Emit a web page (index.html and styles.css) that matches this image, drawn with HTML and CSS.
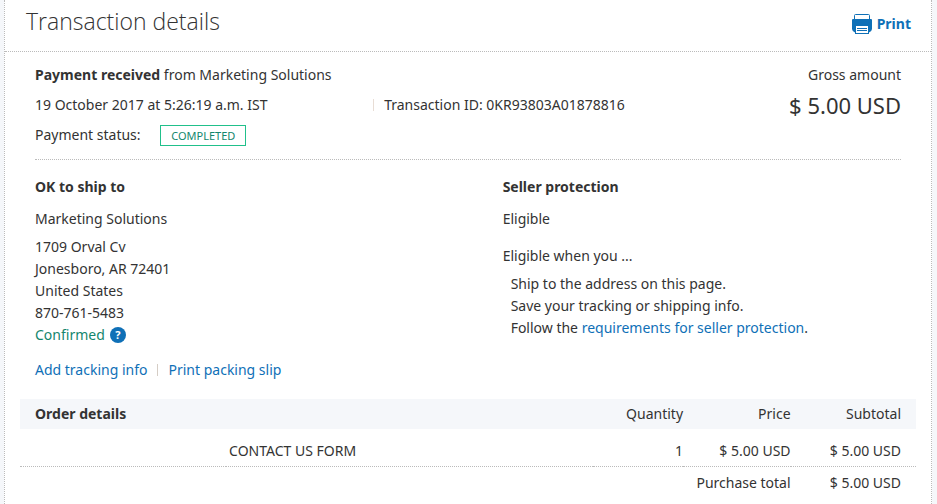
FILE: index.html
```
<!DOCTYPE html>
<html lang="en">
<head>
    <meta charset="UTF-8">
    <meta name="viewport" content="width=device-width, initial-scale=1.0">
    <title>Transaction details</title>
    <link rel="stylesheet" href="styles.css">
</head>
<body>

<main class="card">
    <header class="card-header">
        <h1>Transaction details</h1>
        <a href="#" class="print-link">
            <svg class="print-icon" width="20" height="20" viewBox="0 0 20 20" aria-hidden="true">
                <path d="M2.500 6V1.500a1 1 0 0 1 1-1h13a1 1 0 0 1 1 1V6" fill="#fff" stroke="#0f70b7"/>
                <path d="M1 5h18a1 1 0 0 1 1 1v9a4 4 0 0 1-3 3.500V20H3v-1.500A4 4 0 0 1 0 15V6a1 1 0 0 1 1-1z" fill="#0f70b7"/>
                <path d="M4 12h12v7H4z" fill="#fff"/>
                <path d="M5 14.500h10M5 16.500h10" stroke="#0f70b7"/>
            </svg>
            Print
        </a>
    </header>

    <div class="content">
        <!-- Payment summary -->
        <section class="summary">
            <div class="summary-info">
                <p><strong>Payment received</strong> from Marketing Solutions</p>
                <p class="summary-row">
                    <span>19 October 2017 at 5:26:19 a.m. IST</span>
                    <span class="transaction-id">Transaction ID: 0KR93803A01878816</span>
                </p>
                <p>Payment status: <span class="status">COMPLETED</span></p>
            </div>
            <div class="gross">
                <p>Gross amount</p>
                <p class="amount">$ 5.00 USD</p>
            </div>
        </section>

        <!-- Shipping and protection -->
        <div class="columns">
            <section>
                <h2>OK to ship to</h2>
                <p class="name">Marketing Solutions</p>
                <address>
                    1709 Orval Cv<br>
                    Jonesboro, AR 72401<br>
                    United States<br>
                    870-761-5483
                    <div class="confirmed">Confirmed <button type="button" class="help" aria-label="Help">?</button></div>
                </address>
                <p class="actions">
                    <a href="#">Add tracking info</a>
                    <a href="#" class="packing">Print packing slip</a>
                </p>
            </section>
            <section>
                <h2>Seller protection</h2>
                <p class="eligible">Eligible</p>
                <p class="eligible-when">Eligible when you ...</p>
                <ul class="conditions">
                    <li>Ship to the address on this page.</li>
                    <li>Save your tracking or shipping info.</li>
                    <li>Follow the <a href="#">requirements for seller protection</a>.</li>
                </ul>
            </section>
        </div>
    </div>

    <!-- Order details -->
    <table class="order">
        <thead>
            <tr>
                <th class="col-title" scope="col">Order details</th>
                <th class="col-item"></th>
                <th class="col-quantity num" scope="col">Quantity</th>
                <th class="col-price num" scope="col">Price</th>
                <th class="col-subtotal num" scope="col">Subtotal</th>
            </tr>
        </thead>
        <tbody>
            <tr class="item">
                <td></td>
                <td>CONTACT US FORM</td>
                <td class="num">1</td>
                <td class="num">$ 5.00 USD</td>
                <td class="num">$ 5.00 USD</td>
            </tr>
        </tbody>
        <tfoot>
            <tr>
                <td colspan="4" class="num">Purchase total</td>
                <td class="num">$ 5.00 USD</td>
            </tr>
        </tfoot>
    </table>
</main>

</body>
</html>
```

FILE: styles.css
```
* {
    box-sizing: border-box;
}
body {
    margin: 0;
    background-color: #f5f7fa;
    font-family: "Noto Sans", "Open Sans", sans-serif;
    font-size: 14px;
    line-height: 22px;
    color: #333;
}
h1, h2, p, ul {
    margin: 0;
}
a {
    color: #0f70b7;
    text-decoration: none;
}
a:hover {
    text-decoration: underline;
}
.card {
    min-height: 100vh;
    margin: 0 5px 0 4px;
    border: dotted #bbb;
    border-width: 0 1px;
    background-color: #fff;
}
.card-header {
    display: flex;
    justify-content: space-between;
    align-items: center;
    padding: 5px 20px 8px 21px;
    border-bottom: 1px dotted #bbb;
}
h1 {
    font-family: "Open Sans", "Noto Sans", sans-serif;
    font-size: 23px;
    font-weight: 300;
    line-height: 32px;
    padding-bottom: 6px;
}
.print-link {
    display: flex;
    align-items: center;
    gap: 5px;
    font-weight: bold;
}
.content {
    padding: 0 30px;
}
.summary {
    display: flex;
    justify-content: space-between;
    padding: 8px 0 9px;
    line-height: 30px;
    border-bottom: 1px dotted #bbb;
}
.summary-info {
    flex: 1;
}
.summary-row {
    display: grid;
    grid-template-columns: 39fr 61fr;
    align-items: center;
    margin-right: -113px;
}
.transaction-id {
    line-height: 12px;
    padding-left: 10px;
    border-left: 1px solid #e8ddd5;
}
.status {
    display: inline-block;
    margin-left: 16px;
    padding: 0 10px;
    border: 1px solid #21c08b;
    color: #14866d;
    font-size: 11px;
    line-height: 19px;
}
.gross {
    text-align: right;
}
.amount {
    font-size: 22px;
}
.columns {
    display: grid;
    grid-template-columns: 54% 46%;
    padding: 16px 0 18px;
}
h2 {
    font-size: 14px;
    line-height: 22px;
    margin-bottom: 10px;
}
.name {
    margin-bottom: 6px;
}
address {
    font-style: normal;
}
.confirmed {
    display: flex;
    align-items: center;
    gap: 5px;
    color: #14866d;
}
.help {
    width: 16px;
    height: 16px;
    padding: 0;
    border: none;
    border-radius: 50%;
    background-color: #0f70b7;
    color: #fff;
    font-family: inherit;
    font-size: 11px;
    font-weight: bold;
    line-height: 16px;
    cursor: pointer;
}
.actions {
    display: flex;
    align-items: center;
    gap: 10px;
    margin-top: 13px;
}
.packing {
    line-height: 12px;
    padding-left: 10px;
    border-left: 1px solid #d5cdc5;
}
.eligible {
    margin-bottom: 15px;
}
.eligible-when {
    margin-bottom: 6px;
}
.conditions {
    padding-left: 8px;
    list-style: none;
}
.order {
    width: calc(100% - 30px);
    margin: 0 15px;
    border-collapse: collapse;
    table-layout: fixed;
}
.order th {
    padding: 4px 0 4px 3px;
    background-color: #f5f7fa;
    font-weight: normal;
    text-align: left;
}
.order td {
    padding: 5px 0 5px 3px;
}
.order .item td {
    padding-top: 11px;
    padding-bottom: 4px;
    border-bottom: 1px dotted #bbb;
}
.order th:first-child {
    padding-left: 15px;
    font-weight: bold;
}
.order tr > :last-child {
    padding-right: 15px;
}
.order .num {
    text-align: right;
}
.col-title {
    width: 23%;
}
.col-quantity {
    width: 10%;
}
.col-price {
    width: 12%;
}
.col-subtotal {
    width: 14%;
}
```
